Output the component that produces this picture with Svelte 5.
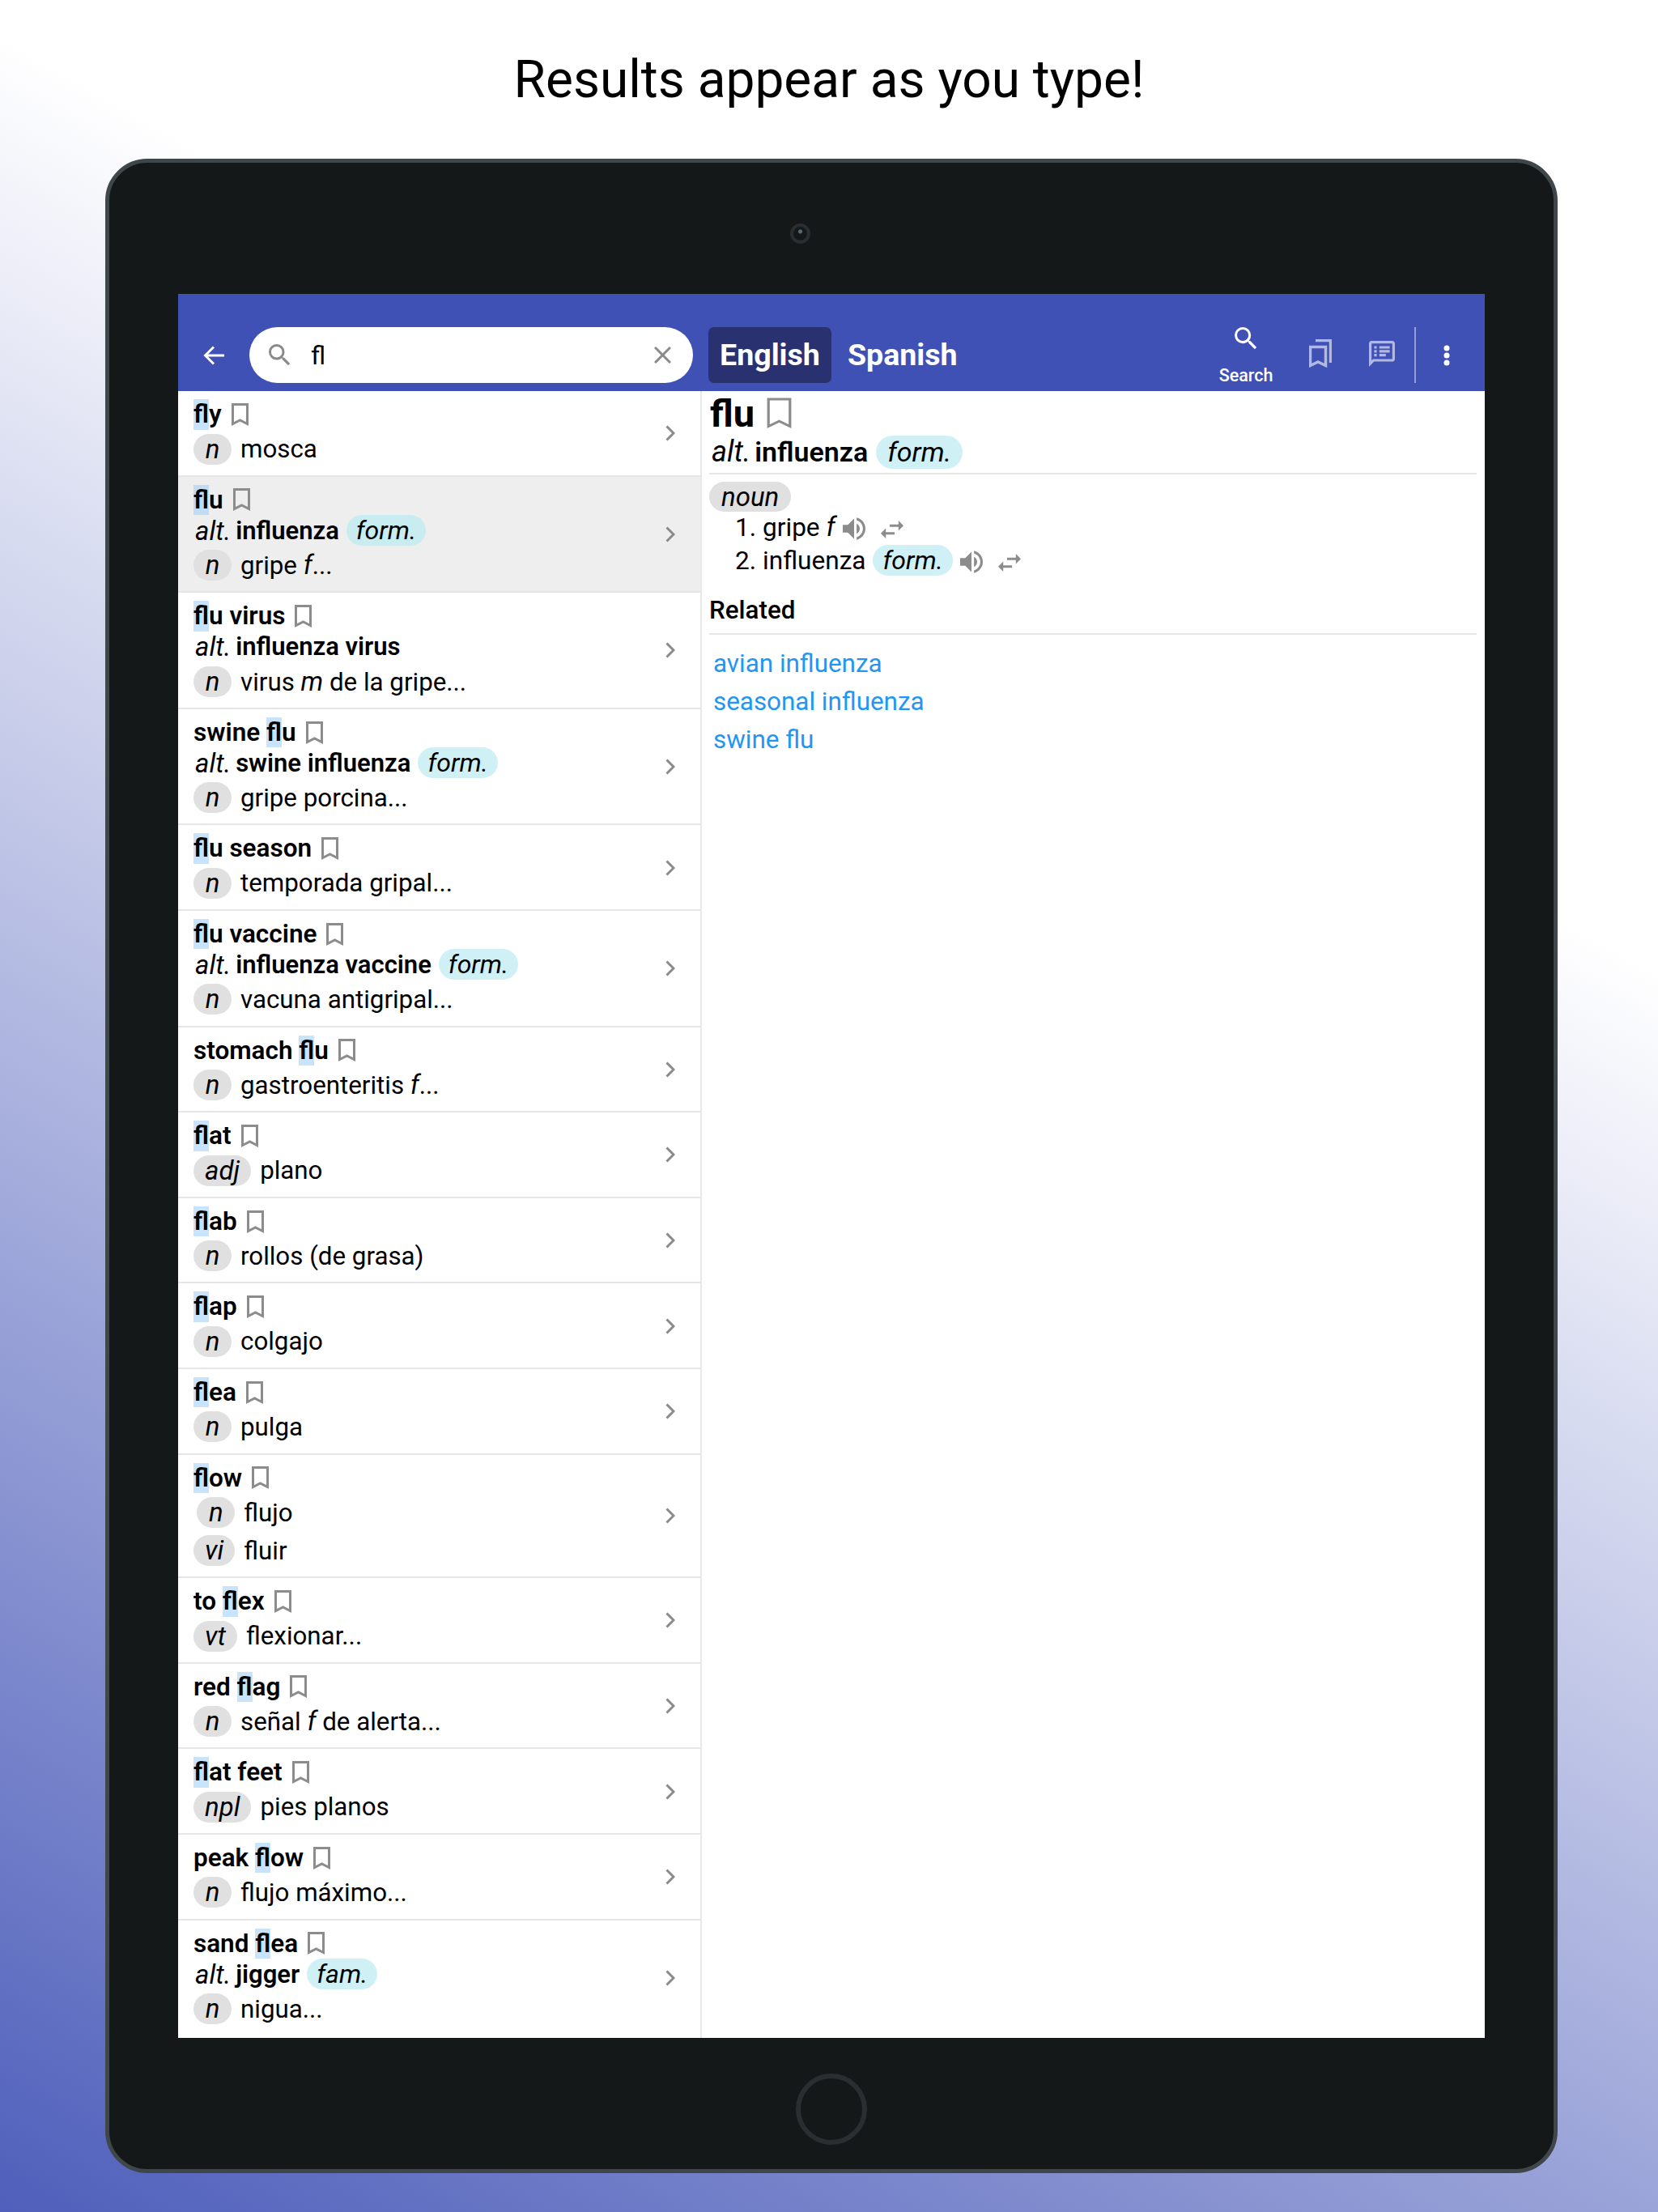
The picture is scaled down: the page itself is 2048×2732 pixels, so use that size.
<script>
  const rows = [
    { title: ["", "fl", "y"], senses: [["n", "mosca"]] },
    { title: ["", "fl", "u"], alt: "influenza", tag: "form.", senses: [["n", "gripe ", "f", "..."]], selected: true },
    { title: ["", "fl", "u virus"], alt: "influenza virus", senses: [["n", "virus ", "m", " de la gripe..."]] },
    { title: ["swine ", "fl", "u"], alt: "swine influenza", tag: "form.", senses: [["n", "gripe porcina..."]] },
    { title: ["", "fl", "u season"], senses: [["n", "temporada gripal..."]] },
    { title: ["", "fl", "u vaccine"], alt: "influenza vaccine", tag: "form.", senses: [["n", "vacuna antigripal..."]] },
    { title: ["stomach ", "fl", "u"], senses: [["n", "gastroenteritis ", "f", "..."]] },
    { title: ["", "fl", "at"], senses: [["adj", "plano"]] },
    { title: ["", "fl", "ab"], senses: [["n", "rollos (de grasa)"]] },
    { title: ["", "fl", "ap"], senses: [["n", "colgajo"]] },
    { title: ["", "fl", "ea"], senses: [["n", "pulga"]] },
    { title: ["", "fl", "ow"], senses: [["n", "flujo"], ["vi", "fluir"]] },
    { title: ["to ", "fl", "ex"], senses: [["vt", "flexionar..."]] },
    { title: ["red ", "fl", "ag"], senses: [["n", "señal ", "f", " de alerta..."]] },
    { title: ["", "fl", "at feet"], senses: [["npl", "pies planos"]] },
    { title: ["peak ", "fl", "ow"], senses: [["n", "flujo máximo..."]] },
    { title: ["sand ", "fl", "ea"], alt: "jigger", tag: "fam.", senses: [["n", "nigua..."]] }
  ];

  const related = ["avian influenza", "seasonal influenza", "swine flu"];
</script>

{#snippet bookmark(cls)}
  <svg class={cls} viewBox="0 0 21 28" preserveAspectRatio="none"><path d="M1.5 1.5h18v24l-9-4.5-9 4.5z" /></svg>
{/snippet}

{#snippet audio()}
  <svg class="speaker" viewBox="3 3 18 18">
    <path d="M3 9v6h4l5 5V4L7 9H3zm13.5 3c0-1.77-1.02-3.29-2.5-4.03v8.05c1.48-.73 2.5-2.25 2.5-4.02z" />
    <path d="M14 3.23v2.06c2.89.86 5 3.54 5 6.71s-2.11 5.85-5 6.71v2.06c4.01-.91 7-4.49 7-8.77s-2.99-7.86-7-8.77z" />
  </svg>
  <svg class="swap" viewBox="3 5 18 14" preserveAspectRatio="none">
    <path d="M6.99 11L3 15l3.99 4v-3H14v-2H6.99v-3zM21 9l-3.99-4v3H10v2h7.01v3L21 9z" />
  </svg>
{/snippet}

<div class="page">
  <h1>Results appear as you type!</h1>

  <div class="tablet">
    <div class="bezel-top"><span class="camera"></span></div>

    <div class="screen">
      <header class="toolbar">
        <svg class="back" viewBox="0 0 26 24"><path d="M26 12H3M13 1.5 2.5 12 13 22.5" /></svg>
        <div class="search">
          <svg class="search-icon" viewBox="3 3 18 18">
            <path d="M15.5 14h-.79l-.28-.27A6.47 6.47 0 0 0 16 9.5 6.5 6.5 0 1 0 9.5 16c1.61 0 3.09-.59 4.23-1.57l.27.28v.79l5 4.99L20.49 19l-4.99-5zm-6 0C7.01 14 5 11.99 5 9.5S7.01 5 9.5 5 14 7.01 14 9.5 11.99 14 9.5 14z" />
          </svg>
          <span class="query">fl</span>
          <svg class="clear" viewBox="0 0 21 21"><path d="M1 1l19 19M20 1 1 20" /></svg>
        </div>
        <div class="tab tab--active">English</div>
        <div class="tab">Spanish</div>

        <div class="actions">
          <div class="action action--search">
            <svg class="action-search" viewBox="3 3 18 18">
              <path d="M15.5 14h-.79l-.28-.27A6.47 6.47 0 0 0 16 9.5 6.5 6.5 0 1 0 9.5 16c1.61 0 3.09-.59 4.23-1.57l.27.28v.79l5 4.99L20.49 19l-4.99-5zm-6 0C7.01 14 5 11.99 5 9.5S7.01 5 9.5 5 14 7.01 14 9.5 11.99 14 9.5 14z" />
            </svg>
            <span>Search</span>
          </div>
          <div class="action">
            <svg class="bookmarks" viewBox="0 0 28 35">
              <path d="M1.500 9.500h19v23l-9.500-4.500-9.500 4.500z" />
              <path d="M8 1.500h18.500V29" />
            </svg>
          </div>
          <div class="action">
            <svg class="notes" viewBox="2 2 20 20">
              <path d="M20 2H4c-1.100 0-2 .9-2 2v18l4-4h14c1.100 0 2-.9 2-2V4c0-1.100-.9-2-2-2zm0 14H5.170L4 17.170V4h16v12zM6 12h2v2H6zm0-3h2v2H6zm0-3h2v2H6zm4 6h5v2h-5zm0-3h8v2h-8zm0-3h8v2h-8z" />
            </svg>
          </div>
          <div class="divider"></div>
          <div class="action action--more">
            <svg class="more" viewBox="0 0 8 26"><circle cx="4" cy="4" r="3.500" /><circle cx="4" cy="13" r="3.500" /><circle cx="4" cy="22" r="3.500" /></svg>
          </div>
        </div>
      </header>

      <div class="content">
        <div class="list">
          {#each rows as row}
            <div class="row" class:row--selected={row.selected}>
              <div class="row-body">
                <div class="word">
                  <span>{row.title[0]}<mark>{row.title[1]}</mark>{row.title[2]}</span>
                  {@render bookmark("mark-small")}
                </div>
                {#if row.alt}
                  <div class="alt">
                    <em>alt.</em> <b>{row.alt}</b>
                    {#if row.tag}<span class="tag">{row.tag}</span>{/if}
                  </div>
                {/if}
                <div class="senses">
                  {#each row.senses as sense}
                    <span class="pos">{sense[0]}</span>
                    <span class="meaning">{sense[1]}{#if sense[2]}<em>{sense[2]}</em>{/if}{sense[3] ?? ""}</span>
                  {/each}
                </div>
              </div>
              <svg class="chevron" viewBox="0 0 12 20"><path d="M1.500 1.500 10 10l-8.500 8.500" /></svg>
            </div>
          {/each}
        </div>

        <div class="detail">
          <div class="head">
            <span>flu</span>
            {@render bookmark("mark-large")}
          </div>
          <div class="head-alt">
            <em>alt.</em> <b>influenza</b>
            <span class="tag">form.</span>
          </div>
          <span class="pos pos--noun">noun</span>
          <ol>
            <li><span>gripe <em>f</em></span>{@render audio()}</li>
            <li><span>influenza</span> <span class="tag">form.</span>{@render audio()}</li>
          </ol>
          <h2>Related</h2>
          <div class="links">
            {#each related as link}
              <div class="link">{link}</div>
            {/each}
          </div>
        </div>
      </div>
    </div>

    <div class="bezel-bottom"><span class="home"></span></div>
  </div>
</div>

<style>
  :global(body) {
    margin: 0;
  }

  .page {
    height: 2732px;
    box-sizing: border-box;
    padding: 0 124px 48px 130px;
    overflow: hidden;
    font-family: Roboto, sans-serif;
    color: #000;
    background: linear-gradient(209.5deg, #fff 30.8%, #4f5fbb 100%);
  }

  h1 {
    height: 196px;
    margin: 0 0 0 -6px;
    padding-top: 61px;
    box-sizing: border-box;
    font-size: 64px;
    font-weight: 400;
    line-height: 76px;
    text-align: center;
  }

  .tablet {
    height: 2488px;
    box-sizing: border-box;
    display: flex;
    flex-direction: column;
    padding: 0 85px;
    background: #141819;
    border: 5px solid #3f474a;
    border-radius: 52px;
  }

  .bezel-top {
    height: 162px;
    flex: none;
    display: flex;
    align-items: center;
    justify-content: center;
    padding-right: 78px;
    padding-top: 13px;
    box-sizing: border-box;
  }

  .camera {
    width: 25px;
    height: 25px;
    box-sizing: border-box;
    border: 4px solid #2a2e31;
    border-radius: 50%;
    background: radial-gradient(circle at 50% 35%, #5b6a72 0 2px, transparent 3px);
  }

  .bezel-bottom {
    flex: 1;
    display: flex;
    align-items: center;
    justify-content: center;
    padding-top: 13px;
  }

  .home {
    width: 88px;
    height: 88px;
    box-sizing: border-box;
    border: 6px solid #2a2e31;
    border-radius: 50%;
  }

  .screen {
    height: 2154px;
    flex: none;
    display: flex;
    flex-direction: column;
    background: #fff;
  }

  .toolbar {
    height: 120px;
    flex: none;
    box-sizing: border-box;
    display: flex;
    align-items: center;
    padding: 41px 9px 10px 31px;
    background: #3f51b5;
    color: #fff;
  }

  .toolbar svg {
    display: block;
    flex: none;
  }

  .back {
    width: 26px;
    height: 24px;
    margin-right: 31px;
    fill: none;
    stroke: #fff;
    stroke-width: 3;
  }

  .search {
    width: 548px;
    height: 69px;
    flex: none;
    box-sizing: border-box;
    display: flex;
    align-items: center;
    padding: 0 27px 0 24px;
    margin-right: 19px;
    border-radius: 35px;
    background: #fff;
    color: #000;
  }

  .search-icon {
    width: 27px;
    height: 27px;
    fill: #8a8a8a;
  }

  .query {
    flex: 1;
    margin-left: 25px;
    font-size: 32px;
  }

  .clear {
    width: 21px;
    height: 21px;
    fill: none;
    stroke: #8a8a8a;
    stroke-width: 3;
  }

  .tab {
    height: 69px;
    box-sizing: border-box;
    padding: 0 14px;
    margin-right: 6px;
    border-radius: 7px;
    font-size: 37.600px;
    font-weight: 700;
    line-height: 68px;
  }

  .tab--active {
    background: #293170;
  }

  .actions {
    margin-left: auto;
    display: flex;
    align-items: stretch;
    height: 69px;
  }

  .action {
    width: 76px;
    display: flex;
    flex-direction: column;
    align-items: center;
    justify-content: center;
    padding-bottom: 4px;
    box-sizing: border-box;
  }

  .action--more {
    padding-bottom: 0;
  }

  .action--search {
    width: 100px;
    margin-right: 4px;
    justify-content: flex-start;
    padding: 0;
    font-size: 21.500px;
    font-weight: 500;
    line-height: 22px;
  }

  .action--search span {
    margin-top: 21px;
  }

  .action-search {
    width: 28px;
    height: 28px;
    fill: #fff;
  }

  .bookmarks {
    width: 28px;
    height: 35px;
    fill: none;
    stroke: rgba(255, 255, 255, 0.6);
    stroke-width: 3.500;
  }

  .notes {
    width: 32px;
    height: 32px;
    fill: rgba(255, 255, 255, 0.6);
  }

  .divider {
    width: 2px;
    margin-left: 2px;
    background: rgba(255, 255, 255, 0.45);
  }

  .more {
    width: 8px;
    height: 26px;
    fill: #fff;
  }

  .content {
    flex: 1;
    min-height: 0;
    display: flex;
  }

  .list {
    width: 647px;
    flex: none;
    box-sizing: border-box;
    border-right: 2px solid #e8e8e8;
    overflow: hidden;
  }

  .row {
    box-sizing: border-box;
    display: flex;
    align-items: center;
    padding: 10px 31px 13.100px 19px;
    border-bottom: 2px solid #e6e6e6;
    font-size: 31.300px;
  }

  .row:last-child {
    border-bottom: 0;
  }

  .row--selected {
    background: #eee;
  }

  .row-body {
    flex: 1;
    min-width: 0;
  }

  .word {
    display: flex;
    align-items: center;
    gap: 12px;
    height: 37.500px;
    font-size: 31.500px;
    font-weight: 600;
    line-height: 37.500px;
    white-space: nowrap;
  }

  mark {
    display: inline-block;
    background: rgba(144, 202, 249, 0.5);
    color: inherit;
  }

  .mark-small {
    width: 21px;
    height: 28px;
    flex: none;
    fill: none;
    stroke: #8c8c8c;
    stroke-width: 3;
  }

  .mark-large {
    width: 31px;
    height: 39px;
    flex: none;
    fill: none;
    stroke: #8c8c8c;
    stroke-width: 2.200;
  }

  .alt {
    display: flex;
    align-items: center;
    height: 38px;
    margin-bottom: 5px;
    padding-left: 2px;
    gap: 6px;
    white-space: nowrap;
  }

  .alt em {
    font-size: 33px;
  }

  .alt b {
    font-size: 31px;
    font-weight: 600;
  }

  .head-alt b {
    font-weight: 600;
  }

  .tag {
    display: inline-block;
    height: 38px;
    padding: 0 12px;
    margin-left: 3px;
    border-radius: 19px;
    background: #cff1f6;
    font-size: 32px;
    font-style: italic;
    line-height: 38px;
  }

  .row--selected .tag {
    background: #c9ecf0;
  }

  .senses {
    display: grid;
    grid-template-columns: max-content 1fr;
    column-gap: 11px;
    row-gap: 9px;
    align-items: center;
    margin-top: 5px;
  }

  .alt + .senses {
    margin-top: 0;
  }

  .pos {
    justify-self: end;
    min-width: 47px;
    height: 38px;
    box-sizing: border-box;
    padding: 0 14px;
    border-radius: 19px;
    background: #e0e0e0;
    font-size: 33px;
    font-style: italic;
    line-height: 38px;
    text-align: center;
  }

  .meaning {
    white-space: nowrap;
  }

  .meaning em {
    font-size: 32.500px;
  }

  .chevron {
    width: 12px;
    height: 20px;
    flex: none;
    margin-top: 4px;
    fill: none;
    stroke: #8a8a8a;
    stroke-width: 3;
  }

  .detail {
    flex: 1;
    min-width: 0;
    box-sizing: border-box;
    padding: 0 10px 0 9px;
    font-size: 31.400px;
  }

  .head {
    display: flex;
    align-items: center;
    gap: 15px;
    height: 55px;
    padding-left: 1px;
    font-size: 47px;
    font-weight: 700;
    line-height: 55px;
  }

  .head-alt {
    display: flex;
    align-items: center;
    gap: 5px;
    height: 40px;
    padding: 0 0 6px 3px;
    border-bottom: 2px solid #e6e6e6;
    font-size: 34px;
    white-space: nowrap;
  }

  .head-alt em {
    font-size: 36px;
  }

  .head-alt .tag {
    height: 41px;
    padding: 0 14px;
    margin-left: 5px;
    border-radius: 21px;
    font-size: 34px;
    line-height: 41px;
  }

  .pos--noun {
    display: inline-block;
    margin-top: 9px;
    vertical-align: top;
    height: 37px;
    padding: 0 15px;
    line-height: 37px;
  }

  ol {
    margin: -2px 0 0;
    padding: 0 0 0 66px;
    font-size: 31.600px;
  }

  li {
    height: 42px;
    line-height: 41px;
  }

  li em {
    font-size: 33px;
  }

  li .tag {
    height: 38px;
    line-height: 38px;
    margin-left: 1px;
    padding: 0 12px;
  }

  .speaker {
    width: 28px;
    height: 28px;
    margin-left: 9px;
    vertical-align: -5px;
    fill: #8c8c8c;
  }

  .swap {
    width: 28px;
    height: 22px;
    margin-left: 19px;
    vertical-align: -3px;
    fill: #8c8c8c;
  }

  h2 {
    margin: 18px 0 0;
    height: 50px;
    border-bottom: 2px solid #e6e6e6;
    font-size: 31.400px;
    font-weight: 500;
    line-height: 44px;
  }

  .links {
    padding: 12px 0 0 5px;
    color: #2196f3;
  }

  .link {
    height: 47px;
    line-height: 47px;
  }
</style>
